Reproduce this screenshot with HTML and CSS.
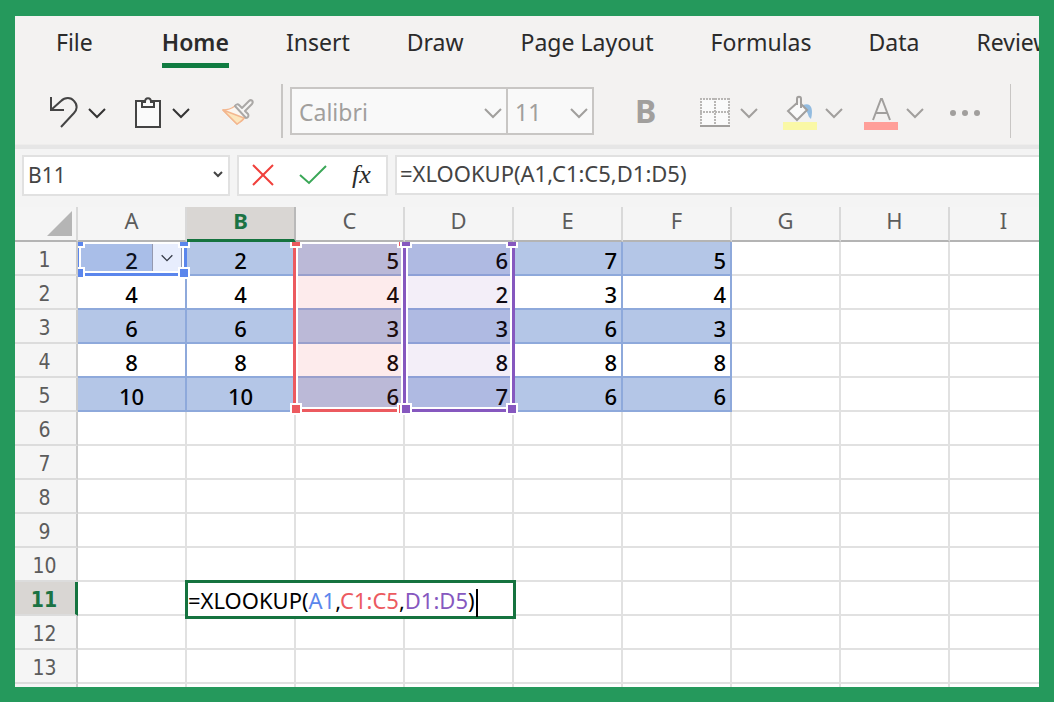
FILE: index.html
```html
<!DOCTYPE html>
<html lang="en">
<head>
  <meta charset="UTF-8">
  <meta name="viewport" content="width=device-width, initial-scale=1.0">
  <title>XLOOKUP</title>
  <link rel="stylesheet" href="styles.css">
</head>
<body>
  <svg class="defs" width="0" height="0" aria-hidden="true">
    <symbol id="chevron" viewBox="0 0 18 12"><path d="M1 2l8 8 8-8" fill="none" stroke="currentColor" stroke-width="2"/></symbol>
  </svg>

  <main class="app">
    <nav class="tabs">
      <button type="button" class="tab tab-file">File</button>
      <button type="button" class="tab active">Home</button>
      <button type="button" class="tab">Insert</button>
      <button type="button" class="tab">Draw</button>
      <button type="button" class="tab">Page Layout</button>
      <button type="button" class="tab">Formulas</button>
      <button type="button" class="tab">Data</button>
      <button type="button" class="tab">Review</button>
    </nav>

    <div class="toolbar">
      <button type="button" class="tool undo" aria-label="Undo">
        <svg width="28" height="32" viewBox="0 0 28 32" fill="none" stroke="#444" stroke-width="2">
          <path d="M1 0v13h13M1 13L11 4c4-4 10-4 13 0 4 4 3 9 0 12L11 30"/>
        </svg>
        <svg class="chevron"><use href="#chevron"/></svg>
      </button>
      <button type="button" class="tool paste" aria-label="Paste">
        <svg width="26" height="32" viewBox="0 0 26 32" fill="#fafafa" stroke="#444" stroke-width="2">
          <path d="M1 4h24v26H1z"/>
          <path d="M7 10V5h3c0-5 6-5 6 0h3v5z"/>
        </svg>
        <svg class="chevron"><use href="#chevron"/></svg>
      </button>
      <button type="button" class="tool painter" aria-label="Format Painter">
        <svg width="32" height="28" viewBox="0 0 32 28" fill="none" stroke-width="1.5" stroke-linejoin="round">
          <path d="M13 7C9 10 5 11 1 11l14 14c4-2 7-5 9-8z" fill="#fbf6f1" stroke="#f3b78f"/>
          <path d="M1 11l21 8c-1 2-4 4-7 6z" fill="#fce6bd" stroke="#f3b78f"/>
          <path d="M13 7c1-2 3-2 4-1l3 3 7-7c2-2 5 0 3 3l-7 7 3 3c1 2 0 4-2 4z" fill="#f6f5f4" stroke="#aaa8a6" stroke-width="2"/>
        </svg>
      </button>
      <span class="divider"></span>

      <div class="combo font-name">
        <select aria-label="Font" disabled><option>Calibri</option></select>
        <svg class="chevron"><use href="#chevron"/></svg>
      </div>
      <div class="combo font-size">
        <select aria-label="Font size" disabled><option>11</option></select>
        <svg class="chevron"><use href="#chevron"/></svg>
      </div>

      <button type="button" class="tool bold" aria-label="Bold" disabled>B</button>
      <button type="button" class="tool borders" aria-label="Borders" disabled>
        <svg width="30" height="32" viewBox="0 0 30 32" fill="none" stroke="#a19f9d" stroke-width="2">
          <path d="M1 2h28v26H1z" fill="#fafafa" stroke="none"/>
          <path d="M0 2h30M0 15h30" stroke-dasharray="2 1" stroke="#b8b6b4"/>
          <path d="M1 1v26M15 1v26M29 1v26" stroke-dasharray="2 1" stroke="#b8b6b4"/>
          <path d="M0 29h30"/>
        </svg>
        <svg class="chevron"><use href="#chevron"/></svg>
      </button>
      <button type="button" class="tool fill" aria-label="Fill Color" disabled>
        <svg width="34" height="36" viewBox="0 0 34 36" fill="none">
          <path d="M20 10c7-3 11 2 8 14-4-3-2-7-6-8z" fill="#93bce0"/>
          <path d="M14 8l-9 8 9 9 10-10-6-6" fill="#fafafa" stroke="#a19f9d" stroke-width="2"/>
          <path d="M14 10V4c0-3 4-3 4 0v9" stroke="#a19f9d" stroke-width="2"/>
          <path d="M0 27h34v8H0z" fill="#faf8a6"/>
        </svg>
        <svg class="chevron"><use href="#chevron"/></svg>
      </button>
      <button type="button" class="tool font-color" aria-label="Font Color" disabled>
        <svg width="34" height="36" viewBox="0 0 34 36" fill="none">
          <path d="M9 25l8-21h1l8 21M12 18h11" stroke="#a19f9d" stroke-width="2"/>
          <path d="M0 27h34v8H0z" fill="#ff9f99"/>
        </svg>
        <svg class="chevron"><use href="#chevron"/></svg>
      </button>
      <button type="button" class="tool more" aria-label="More" disabled>
        <svg width="30" height="6" viewBox="0 0 30 6" fill="#a19f9d">
          <circle cx="3" cy="3" r="3"/><circle cx="15" cy="3" r="3"/><circle cx="27" cy="3" r="3"/>
        </svg>
      </button>
      <span class="divider thin"></span>
    </div>

    <div class="formula-bar">
      <div class="name-box">
        <input type="text" value="B11" aria-label="Name box">
        <svg width="10" height="7" viewBox="0 0 10 7"><path d="M1 1l4 4 4-4" fill="none" stroke="#444" stroke-width="2"/></svg>
      </div>
      <div class="actions">
        <button type="button" aria-label="Cancel">
          <svg width="22" height="22" viewBox="0 0 22 22"><path d="M1 1l20 20M21 1L1 21" stroke="#f0403c" stroke-width="2"/></svg>
        </button>
        <button type="button" aria-label="Enter">
          <svg width="28" height="20" viewBox="0 0 28 20"><path d="M1 10l9 8L27 1" fill="none" stroke="#3aa757" stroke-width="2"/></svg>
        </button>
        <button type="button" class="fx" aria-label="Insert function">fx</button>
      </div>
      <input type="text" class="formula" value="=XLOOKUP(A1,C1:C5,D1:D5)" aria-label="Formula">
    </div>

    <div class="sheet">
      <table>
        <colgroup>
          <col class="col-head">
          <col class="col"><col class="col"><col class="col"><col class="col">
          <col class="col"><col class="col"><col class="col"><col class="col">
          <col>
        </colgroup>
        <thead>
          <tr>
            <th class="corner"><svg width="26" height="26" viewBox="0 0 26 26"><path d="M25 0v25H0z" fill="#b5b5b5"/></svg></th>
            <th>A</th><th class="selected">B</th><th>C</th><th>D</th><th>E</th><th>F</th><th>G</th><th>H</th><th>I</th>
          </tr>
        </thead>
        <tbody>
          <tr class="data band"><th>1</th><td class="mid">2</td><td class="mid">2</td><td>5</td><td>6</td><td>7</td><td>5</td><td></td><td></td><td></td></tr>
          <tr class="data"><th>2</th><td class="mid">4</td><td class="mid">4</td><td>4</td><td>2</td><td>3</td><td>4</td><td></td><td></td><td></td></tr>
          <tr class="data band"><th>3</th><td class="mid">6</td><td class="mid">6</td><td>3</td><td>3</td><td>6</td><td>3</td><td></td><td></td><td></td></tr>
          <tr class="data"><th>4</th><td class="mid">8</td><td class="mid">8</td><td>8</td><td>8</td><td>8</td><td>8</td><td></td><td></td><td></td></tr>
          <tr class="data band"><th>5</th><td class="mid">10</td><td class="mid">10</td><td>6</td><td>7</td><td>6</td><td>6</td><td></td><td></td><td></td></tr>
          <tr><th>6</th><td></td><td></td><td></td><td></td><td></td><td></td><td></td><td></td><td></td></tr>
          <tr><th>7</th><td></td><td></td><td></td><td></td><td></td><td></td><td></td><td></td><td></td></tr>
          <tr><th>8</th><td></td><td></td><td></td><td></td><td></td><td></td><td></td><td></td><td></td></tr>
          <tr><th>9</th><td></td><td></td><td></td><td></td><td></td><td></td><td></td><td></td><td></td></tr>
          <tr><th>10</th><td></td><td></td><td></td><td></td><td></td><td></td><td></td><td></td><td></td></tr>
          <tr><th class="selected">11</th><td></td><td></td><td></td><td></td><td></td><td></td><td></td><td></td><td></td></tr>
          <tr><th>12</th><td></td><td></td><td></td><td></td><td></td><td></td><td></td><td></td><td></td></tr>
          <tr><th>13</th><td></td><td></td><td></td><td></td><td></td><td></td><td></td><td></td><td></td></tr>
          <tr><th></th><td></td><td></td><td></td><td></td><td></td><td></td><td></td><td></td><td></td></tr>
        </tbody>
      </table>

      <!-- ranges used by the formula -->
      <div class="overlay">
        <button type="button" class="cell-menu" aria-label="Cell menu"><svg width="12" height="8"><use href="#chevron"/></svg></button>
        <div class="range range-a"><i class="tl"></i><i class="tr"></i><i class="bl"></i><i class="br"></i></div>
        <div class="range range-c"><i class="tl"></i><i class="tr"></i><i class="bl"></i><i class="br"></i></div>
        <div class="range range-d"><i class="tl"></i><i class="tr"></i><i class="bl"></i><i class="br"></i></div>
        <div class="editor">=XLOOKUP(<span class="ref-a">A1</span>,<span class="ref-c">C1:C5</span>,<span class="ref-d">D1:D5</span>)<span class="caret"></span></div>
      </div>
    </div>
  </main>
</body>
</html>
```
FILE: styles.css
```css
* {
  box-sizing: border-box;
}
body {
  margin: 0;
  height: 100vh;
  padding: 16px 15px 15px;
  background: #25995c;
  font-family: "Noto Sans", sans-serif;
  color: #2b2b2b;
}
button, input, select {
  font: inherit;
  color: inherit;
  margin: 0;
  padding: 0;
  border: 0;
  background: none;
}
.defs {
  position: absolute;
}
.app {
  height: 100%;
  display: flex;
  flex-direction: column;
  overflow: hidden;
  background: #f4f4f4;
}

/* ribbon */
.tabs {
  display: flex;
  flex: none;
  gap: 57px;
  padding: 10px 0 0 41px;
  background: #f3f2f1;
}
.tab {
  flex: none;
  height: 42px;
  padding-bottom: 5px;
  font-size: 23px;
  line-height: 32px;
  white-space: nowrap;
  border-bottom: 5px solid transparent;
}
.tab-file {
  margin-right: 12px;
}
.tab.active {
  font-weight: 600;
  border-bottom-color: #107c41;
}
.toolbar {
  display: flex;
  flex: none;
  align-items: center;
  height: 77px;
  padding: 9px 0 0 35px;
  background: #f3f2f1;
  border-bottom: 1px solid #eeedec;
}
.tool {
  display: flex;
  flex: none;
  align-items: center;
  gap: 8px;
  padding-top: 4px;
  color: #333;
}
.tool:disabled {
  color: #a19f9d;
}
.chevron {
  width: 18px;
  height: 12px;
}
.undo {
  gap: 10px;
}
.paste {
  margin-left: 29px;
  gap: 11px;
}
.painter {
  margin-left: 32px;
}
.divider {
  flex: none;
  width: 2px;
  height: 54px;
  margin-left: 27px;
  background: #c8c6c4;
}
.divider.thin {
  width: 1px;
  margin-left: 30px;
}
.combo {
  position: relative;
  flex: none;
}
.combo select {
  appearance: none;
  width: 100%;
  height: 48px;
  padding: 3px 0 0 7px;
  border: 2px solid #c8c6c4;
  background: #f9f9f9;
  color: #a19f9d;
  font-size: 23px;
  opacity: 1;
}
.combo .chevron {
  position: absolute;
  right: 6px;
  top: 20px;
  color: #a19f9d;
}
.font-name {
  width: 218px;
  margin-left: 7px;
}
.font-size {
  width: 88px;
  margin-left: -2px;
}
.bold {
  margin-left: 41px;
  padding-top: 0;
  font-size: 32px;
  line-height: 40px;
  font-weight: 700;
}
.borders {
  margin-left: 44px;
  gap: 10px;
}
.fill {
  margin-left: 25px;
}
.font-color {
  margin-left: 21px;
}
.more {
  margin-left: 26px;
}

/* formula bar */
.formula-bar {
  display: flex;
  flex: none;
  gap: 7px;
  height: 62px;
  padding: 6px 0 0 7px;
  border-top: 4px solid #e6e6e6;
}
.name-box, .actions, .formula {
  height: 41px;
  background: #fff;
  border: 2px solid #e1e1e1;
}
.name-box {
  display: flex;
  flex: none;
  align-items: center;
  width: 208px;
  padding: 0 5px 2px 4px;
}
.name-box input {
  flex: 1;
  min-width: 0;
  font-size: 21px;
  color: #444;
}
.actions {
  display: flex;
  flex: none;
  align-items: center;
  gap: 25px;
  width: 151px;
  padding: 0 0 2px 13px;
}
.actions svg {
  display: block;
}
.fx {
  font-family: "Liberation Serif", serif;
  font-style: italic;
  font-size: 26px;
  line-height: 30px;
}
.formula {
  flex: 1;
  min-width: 0;
  height: 40px;
  padding: 0 0 4px 3px;
  border-right: 0;
  font-size: 22px;
  color: #444;
}

/* grid */
.sheet {
  position: relative;
  flex: 1;
  min-height: 0;
  overflow: hidden;
}
table {
  width: 100%;
  min-width: 1044px;
  table-layout: fixed;
  border-collapse: separate;
  border-spacing: 0;
}
.col-head {
  width: 63px;
}
.col {
  width: 109px;
}
th, td {
  height: 34px;
  padding: 0;
  line-height: 28px;
  border-right: 2px solid #e1e1e1;
  border-bottom: 2px solid #e1e1e1;
}
th {
  font-size: 22px;
  font-weight: 400;
  color: #5c5c5c;
  background: #f5f5f5;
}
thead th {
  height: 35px;
  padding-bottom: 7px;
  line-height: 26px;
  border-right-color: #d9d9d9;
  border-bottom-color: #b4b4b4;
}
tbody th {
  font-family: "DejaVu Sans Condensed", "DejaVu Sans", sans-serif;
  font-size: 21px;
  padding: 4px 2px 0 0;
  border-right-color: #cbcbcb;
  border-bottom-color: #dcdcdc;
}
.corner {
  padding: 0 3px 0 0;
  text-align: right;
}
.corner svg {
  display: block;
  margin-left: auto;
}
th.selected {
  font-weight: 700;
  color: #1b7344;
  background: #d9d6d3;
}
thead th.selected {
  border-right-color: #b9b9b9;
  border-bottom: 3px solid #15733f;
  padding-bottom: 6px;
}
tbody th.selected {
  border-right: 3px solid #15733f;
}
td {
  background: #fff;
  font-size: 22px;
  font-weight: 500;
  color: #000;
  text-align: right;
  padding: 3px 4px 0 0;
}
td.mid {
  text-align: center;
  padding-right: 0;
}
.data td:nth-child(-n+7) {
  border-color: #8ea9db;
}
.band td:nth-child(-n+7) {
  background: #b4c6e7;
}

/* everything below lies over the cells, measured from the corner of A1 */
.overlay {
  position: absolute;
  left: 63px;
  top: 35px;
  right: 0;
  bottom: 0;
  overflow: hidden;
}
.range {
  position: absolute;
  top: -3px;
  height: 173px;
  border: 3px solid;
  box-shadow: inset 0 0 0 2px #fff;
}
.range i {
  position: absolute;
  width: 12px;
  height: 12px;
  border: 2px solid #fff;
  background: currentColor;
}
.range .tl, .range .bl {
  left: -6px;
}
.range .tr, .range .br {
  right: -6px;
}
.range .tl, .range .tr {
  top: -6px;
}
.range .bl, .range .br {
  bottom: -6px;
}
.range-a {
  left: -2px;
  width: 111px;
  height: 37px;
  color: #5b86ec;
  background: rgba(91, 134, 236, 0.12);
}
.range-c {
  left: 215px;
  width: 113px;
  color: #ec5a5f;
  background: rgba(236, 90, 95, 0.12);
}
.range-d {
  left: 325px;
  width: 112px;
  color: #8658bf;
  background: rgba(134, 88, 191, 0.1);
}
.cell-menu {
  position: absolute;
  left: 74px;
  top: 1px;
  width: 30px;
  height: 29px;
  background: #fbfcff;
  border: 1px solid #9d9da8;
  border-width: 0 1px;
  color: #333;
}
.cell-menu svg {
  display: block;
  margin: auto;
}
.editor {
  position: absolute;
  left: 107px;
  top: 338px;
  width: 331px;
  height: 39px;
  background: #fff;
  border: 3px solid #15733f;
  font-size: 22px;
  line-height: 34px;
  color: #000;
  white-space: nowrap;
}
.ref-a {
  color: #5b86ec;
}
.ref-c {
  color: #ec5a5f;
}
.ref-d {
  color: #8658bf;
}
.caret {
  display: inline-block;
  width: 2px;
  height: 28px;
  margin-left: 1px;
  background: #000;
  vertical-align: middle;
}
```
